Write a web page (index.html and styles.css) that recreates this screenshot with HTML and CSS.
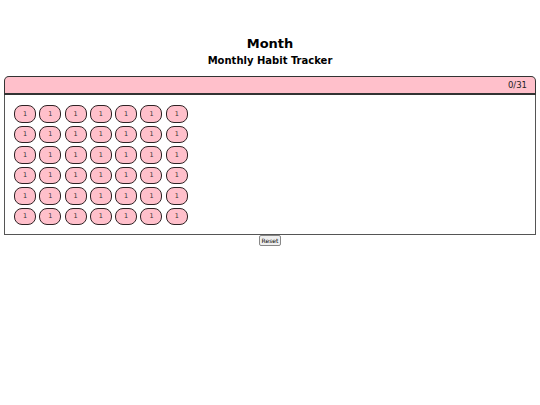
FILE: index.html
```html
<!DOCTYPE html>
<html>
<head>
<meta charset="utf-8">
<link rel="stylesheet" href="styles.css">
</head>
<body>
<h1 class="title">Month</h1>
<h2 class="subtitle">Monthly Habit Tracker</h2>
<div class="tracker">
  <div class="tracker-head"><span class="count">0/31</span></div>
  <div class="tracker-body">
    <div class="grid">
      <div class="day">1</div><div class="day">1</div><div class="day">1</div><div class="day">1</div><div class="day">1</div><div class="day">1</div><div class="day">1</div>
      <div class="day">1</div><div class="day">1</div><div class="day">1</div><div class="day">1</div><div class="day">1</div><div class="day">1</div><div class="day">1</div>
      <div class="day">1</div><div class="day">1</div><div class="day">1</div><div class="day">1</div><div class="day">1</div><div class="day">1</div><div class="day">1</div>
      <div class="day">1</div><div class="day">1</div><div class="day">1</div><div class="day">1</div><div class="day">1</div><div class="day">1</div><div class="day">1</div>
      <div class="day">1</div><div class="day">1</div><div class="day">1</div><div class="day">1</div><div class="day">1</div><div class="day">1</div><div class="day">1</div>
      <div class="day">1</div><div class="day">1</div><div class="day">1</div><div class="day">1</div><div class="day">1</div><div class="day">1</div><div class="day">1</div>
    </div>
  </div>
</div>
<div class="actions"><button class="reset">Reset</button></div>
</body>
</html>
```
FILE: styles.css
```css
html, body {
  margin: 0;
  padding: 0;
  background: #fff;
  font-family: "DejaVu Sans", Verdana, sans-serif;
  color: #000;
}
.title {
  margin: 36px 0 0;
  font-size: 13px;
  line-height: 16px;
  text-align: center;
  font-weight: bold;
}
.subtitle {
  margin: 3px 0 0;
  font-size: 10px;
  line-height: 12px;
  text-align: center;
  font-weight: bold;
}
.tracker {
  margin: 9px 4px 0;
}
.tracker-head {
  background: #ffc0cb;
  border: 1px solid #333;
  border-bottom-width: 2px;
  border-radius: 5px 5px 0 0;
  height: 16px;
  display: flex;
  align-items: center;
  justify-content: flex-end;
  padding: 0 8px;
}
.count {
  font-size: 8.5px;
  color: #222;
}
.tracker-body {
  border: 1px solid #555;
  border-top: none;
  padding: 10px 9px 9px;
}
.grid {
  display: grid;
  grid-template-columns: repeat(7, 22px);
  grid-auto-rows: 17.5px;
  column-gap: 3.3px;
  row-gap: 3px;
}
.day {
  box-sizing: border-box;
  background: #ffc0cb;
  border: 1.3px solid #2e2224;
  border-radius: 8px;
  font-size: 6.5px;
  color: #333;
  display: flex;
  align-items: center;
  justify-content: center;
}
.actions {
  display: flex;
  justify-content: center;
  margin-top: 0;
}
.reset {
  font-family: "DejaVu Sans", sans-serif;
  font-size: 6px;
  padding: 1px 2px;
  line-height: 7px;
  background: #efefef;
  border: 1px solid #888;
  border-radius: 2px;
  color: #000;
}
```
